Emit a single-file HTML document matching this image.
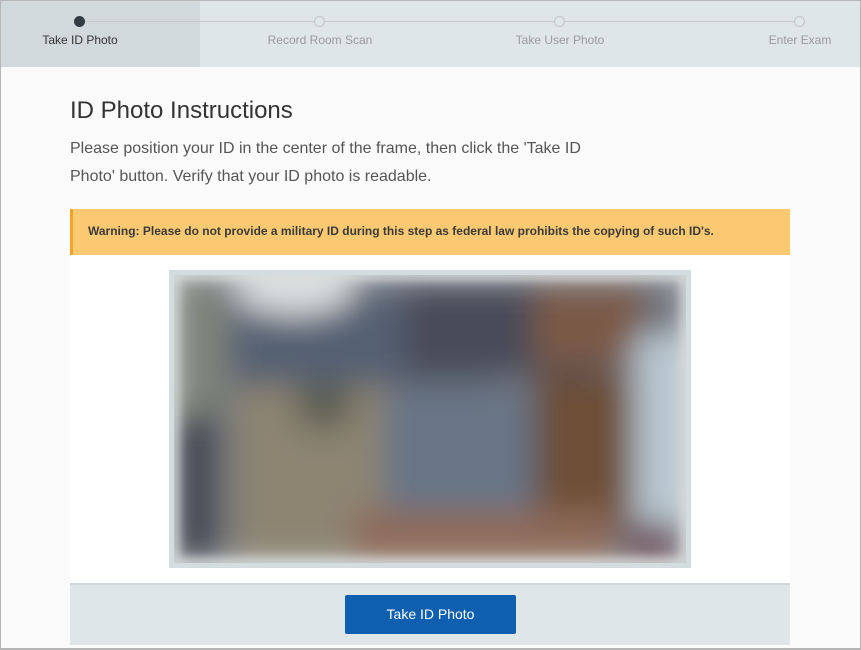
<!DOCTYPE html>
<html><head><meta charset="utf-8"><style>
*{margin:0;padding:0;box-sizing:border-box}
body{width:861px;height:650px;overflow:hidden;background:#fafafa;font-family:"Liberation Sans",sans-serif;position:relative}
.frame{position:absolute;left:0;top:0;width:861px;height:650px;border:1px solid #b5b5b5;border-bottom:2px solid #b5b5b5;pointer-events:none}
.hdr{position:absolute;left:0;top:0;width:861px;height:67px;background:#dfe6e8}
.act{position:absolute;left:0;top:0;width:200px;height:67px;background:#d2d9dc}
.line{position:absolute;left:80px;top:21px;width:720px;height:1px;background:#c9c9c9}
.dot{position:absolute;top:16px;width:11px;height:11px;border-radius:50%;border:1.5px solid #c4c4c4;background:#dfe6e8}
.lbl{position:absolute;top:33px;font-size:12px;color:#9a9a9a;white-space:nowrap;transform:translateX(-50%)}
h1{position:absolute;left:70px;top:97px;font-size:24px;font-weight:normal;color:#333}
p.i{position:absolute;left:70px;top:135px;width:550px;font-size:16px;line-height:28px;color:#555}
.warn{position:absolute;left:70px;top:209px;width:720px;height:46px;background:#fbc971;border-left:3px solid #f5a32a;font-size:12px;font-weight:bold;color:#3a3a3a;padding:15px 0 0 15px;letter-spacing:0}
.panel{position:absolute;left:70px;top:255px;width:720px;height:328px;background:#fff}
.photo{position:absolute;left:169px;top:270px;width:522px;height:298px;background:#d3dcdf;padding:5px}
.foot{position:absolute;left:70px;top:583px;width:720px;height:62px;background:#dfe6e8;border-top:2px solid #d0d8db}
.btn{position:absolute;left:275px;top:10px;width:171px;height:39px;background:#0f5fb0;border-radius:2px;color:#fff;font-size:14px;text-align:center;line-height:39px}
</style></head><body>
<div class="hdr"><div class="act"></div><div class="line"></div>
<div class="dot" style="left:74px;background:#333c44;border-color:#333c44"></div>
<div class="dot" style="left:314px"></div><div class="dot" style="left:554px"></div><div class="dot" style="left:794px"></div>
<div class="lbl" style="left:80px;color:#333">Take ID Photo</div>
<div class="lbl" style="left:320px">Record Room Scan</div>
<div class="lbl" style="left:560px">Take User Photo</div>
<div class="lbl" style="left:800px">Enter Exam</div>
</div>
<h1>ID Photo Instructions</h1>
<p class="i">Please position your ID in the center of the frame, then click the 'Take ID Photo' button. Verify that your ID photo is readable.</p>
<div class="panel"></div>
<div class="warn">Warning: Please do not provide a military ID during this step as federal law prohibits the copying of such ID's.</div>
<div class="photo"><svg width="512" height="288" viewBox="0 0 512 288">
<defs><filter id="b" x="-20%" y="-20%" width="140%" height="140%"><feGaussianBlur stdDeviation="16"/></filter>
<filter id="e"><feGaussianBlur stdDeviation="5"/></filter></defs>
<rect width="512" height="288" fill="#d8dcdc"/>
<g filter="url(#b)">
<rect x="0" y="0" width="512" height="288" fill="#707680"/>
<rect x="60" y="20" width="260" height="90" fill="#556072"/>
<ellipse cx="120" cy="15" rx="60" ry="25" fill="#dcdfe0"/>
<rect x="0" y="10" width="50" height="130" fill="#7d8478"/>
<rect x="0" y="140" width="40" height="148" fill="#3a3c48"/>
<rect x="60" y="110" width="150" height="178" fill="#8d8472"/>
<ellipse cx="150" cy="130" rx="30" ry="25" fill="#5c5e52"/>
<rect x="210" y="120" width="150" height="120" fill="#687486"/>
<rect x="230" y="10" width="200" height="90" fill="#4a4c58"/>
<rect x="360" y="10" width="110" height="80" fill="#7a5a46"/>
<rect x="360" y="100" width="100" height="150" fill="#6d5038"/>
<rect x="180" y="235" width="260" height="53" fill="#8e6a58"/>
<rect x="460" y="60" width="52" height="190" fill="#b8c6d0"/>
<ellipse cx="478" cy="268" rx="25" ry="20" fill="#6a3c48"/>
</g>
<rect x="0" y="0" width="512" height="288" fill="none" stroke="#d8dcdc" stroke-width="8" filter="url(#e)"/>
</svg></div>
<div class="foot"><div class="btn">Take ID Photo</div></div>
<div class="frame"></div>
</body></html>
